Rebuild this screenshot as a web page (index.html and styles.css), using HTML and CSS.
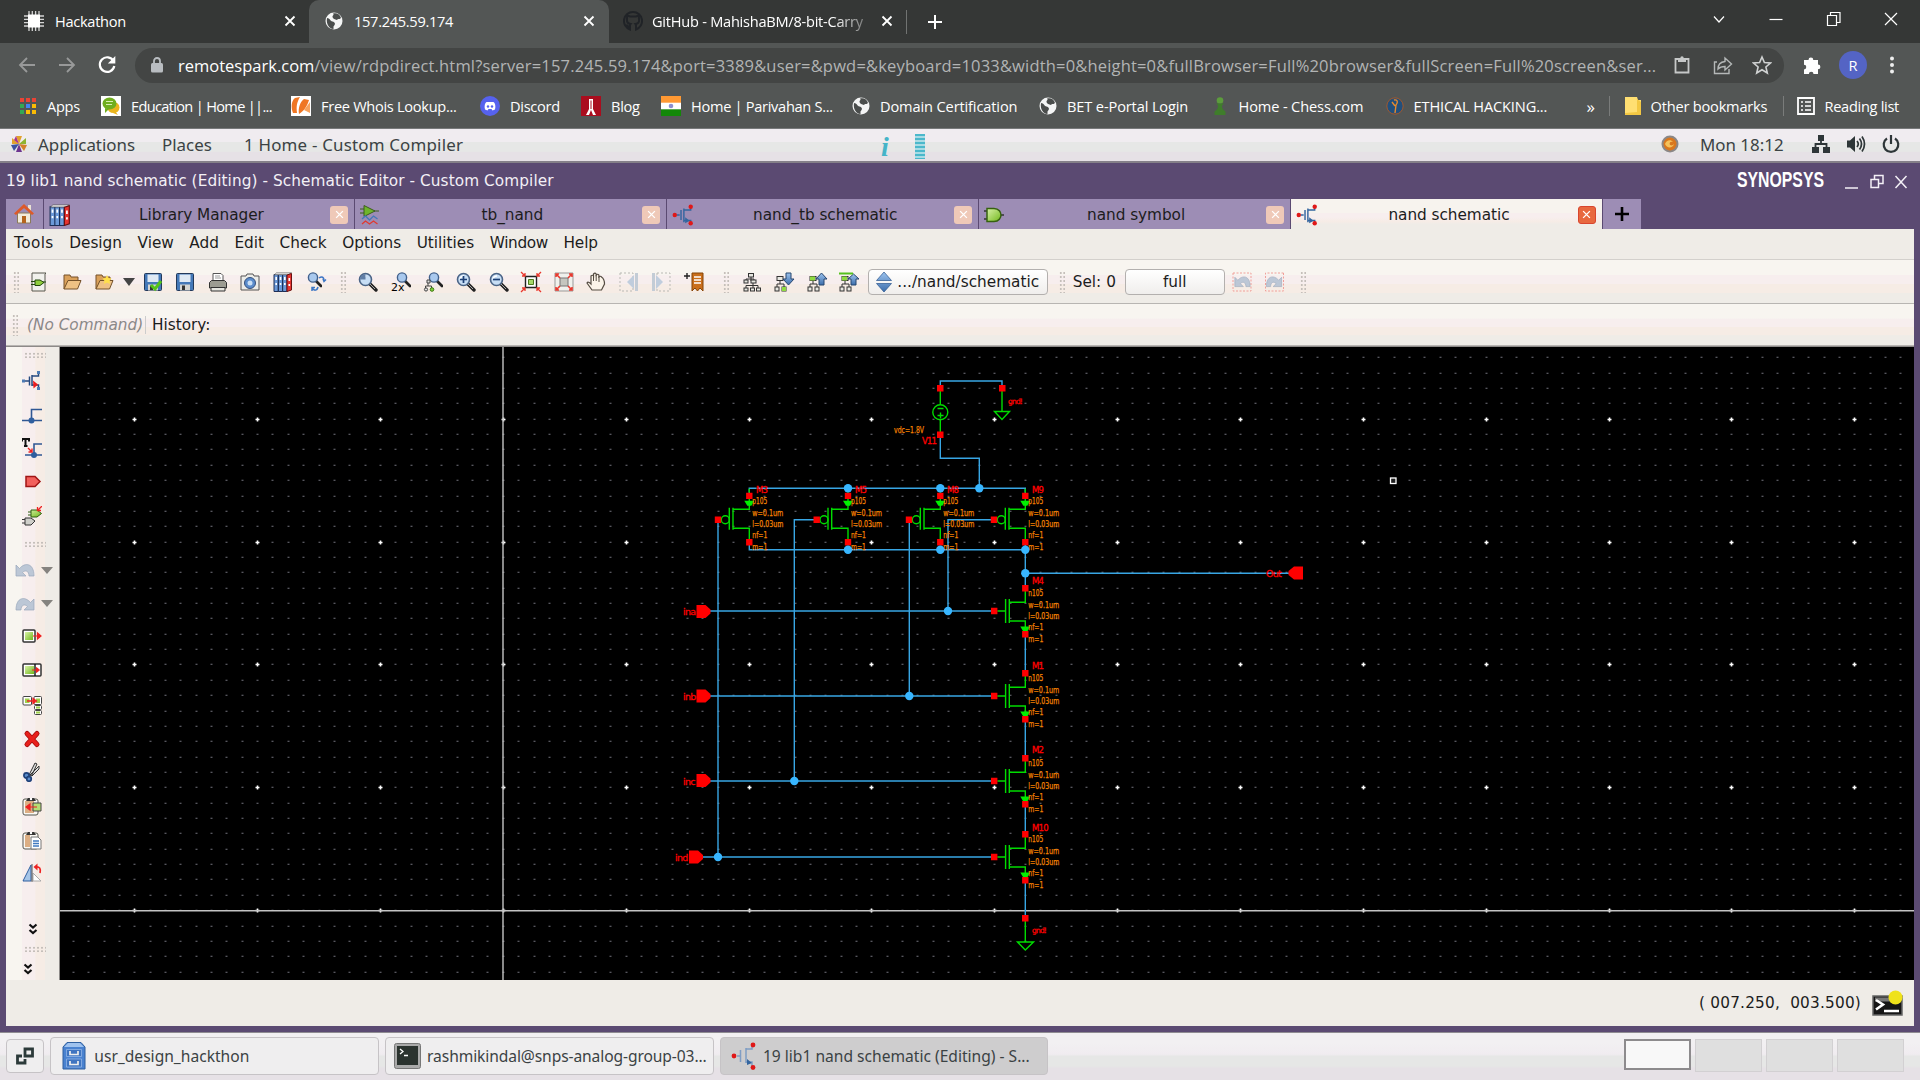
FILE: index.html
```
<!DOCTYPE html>
<html lang="en">
<head>
<meta charset="utf-8">
<title>157.245.59.174</title>
<link rel="stylesheet" href="styles.css">
</head>
<body>
<svg class="defs" aria-hidden="true">
  <linearGradient id="blueG" x1="0" y1="0" x2="0" y2="1"><stop offset="0" stop-color="#9cc3ee"/><stop offset="1" stop-color="#3c6dab"/></linearGradient>
  <linearGradient id="greenG" x1="0" y1="0" x2="1" y2="1"><stop offset="0" stop-color="#d9f2a8"/><stop offset="1" stop-color="#72b81c"/></linearGradient>
  <symbol id="globe" viewBox="0 0 18 18"><circle cx="9" cy="9" r="8.500" fill="#f4f5f5"/><path d="M2 6c3 0 3 3 5.500 3.500S11 12 8.500 14.500v2.500C4 16.500 1 12 2 6zM8 1.500c4-1 7 1 8 4.500-2 2-3 0-4 2-2-1-4-1-4.500-3 0-2 2-2 .5-3.500z" fill="#4a4d4c"/></symbol>
  <symbol id="x" viewBox="0 0 12 12"><path d="M1.500 1.500l9 9M10.500 1.500l-9 9" stroke="currentColor" stroke-width="1.800" fill="none"/></symbol>
  <symbol id="mag" viewBox="0 0 20 20"><path d="M11 11l7 7" stroke="#222" stroke-width="3.400" stroke-linecap="round"/><path d="M12 12l5 5" stroke="#aaa" stroke-width="1"/><circle cx="7.500" cy="7.500" r="6" fill="#c7def5" stroke="#4a6486" stroke-width="1.600"/><path d="M4 7a4 4 0 0 1 4-3" stroke="#fff" stroke-width="1.500" fill="none"/></symbol>
  <symbol id="smag" viewBox="0 0 20 20"><path d="M14 9l5 5" stroke="#222" stroke-width="2.800" stroke-linecap="round"/><circle cx="11" cy="5.500" r="4.600" fill="#a9c9ee" stroke="#41618c" stroke-width="1.400"/></symbol>
  <symbol id="folder" viewBox="0 0 20 20"><path d="M2 17V3h6l1 2h7v4" fill="#d9a05a" stroke="#74512a"/><path d="M2 17l4-8.500h13L15.500 17z" fill="#eec184" stroke="#74512a"/></symbol>
  <symbol id="disk" viewBox="0 0 20 20"><rect x="1.500" y="1.500" width="17" height="17" rx="1" fill="#4478b8" stroke="#23395a"/><rect x="4.500" y="2.500" width="11" height="7.500" fill="#dfe9f4"/><rect x="5" y="12.500" width="10" height="6" fill="#d5d5d2"/><rect x="7" y="13.500" width="3" height="4.500" fill="#333"/></symbol>
  <symbol id="books" viewBox="0 0 20 20"><path d="M1 2.500h4.300v17H1zM5.300 2.500h4.300v17H5.300zM9.600 2.500h4.300v17H9.600z" fill="#6b99d8" stroke="#1c2f57"/><path d="M3.500 .8h15l-3 1.900h-14z" fill="#eee" stroke="#555" stroke-width=".6"/><path d="M14 3l4.500-1.500V18L14 19.500z" fill="#e6332f" stroke="#691010"/><path d="M2.400 5h1.600v3H2.400zM6.700 5h1.600v3H6.700zM11 5h1.600v3H11zM2.400 11h1.600v2H2.400zM6.700 11h1.600v2H6.700zM11 11h1.600v2H11zM15.500 6h1.600v3h-1.600zM15.500 12h1.600v2h-1.600z" fill="#fff"/></symbol>
  <symbol id="fet" viewBox="0 0 20 20"><path d="M4 10h3M8.200 5.500v9M10.800 4v12.500M10.800 5.500H17V2M10.800 15H17v4" fill="none" stroke="#33659f" stroke-width="1.300"/><path d="M12 12l4 3.200-4 2.400z" fill="#33659f"/><circle cx="2.500" cy="10" r="2" fill="#e01818"/><circle cx="17" cy="2.500" r="2" fill="#e01818"/><circle cx="17" cy="17.500" r="2" fill="#e01818"/></symbol>
  <symbol id="inst" viewBox="0 0 20 20"><path d="M2 10h5M7.500 5.500v9M10 5h6.500V2M10 4v11M10 14h6.500v4" fill="none" stroke="#274a80" stroke-width="1.500"/><path d="M11 9.500l5 4-4.500 4z" fill="#ee1c1c"/><path d="M0 8.500h3v3H0zM15 0h3v3h-3zM15 16h3v3h-3z" fill="#4e7bb4"/></symbol>
  <symbol id="tree" viewBox="0 0 20 20"><path d="M9 5v4M4 16v-2.500h12V16M11 11v5M4 8V7h8v1" stroke="#333" fill="none"/><g fill="#e6e6e0" stroke="#333"><rect x="6.500" y="1.500" width="5" height="3.500"/><rect x="2" y="8" width="4" height="3"/><rect x="9" y="8" width="5" height="3"/><rect x="2" y="16" width="4" height="3"/><rect x="8.500" y="16" width="4" height="3"/><rect x="14.500" y="16" width="4" height="3"/></g></symbol>
  <symbol id="ltree" viewBox="0 0 20 20"><path d="M6 8v4M3 16v-4h7v4" stroke="#333" fill="none"/><g fill="#e8e8e2" stroke="#333"><rect x="3" y="4.500" width="6" height="4"/><rect x="1" y="15" width="4" height="4"/><rect x="8" y="15" width="4" height="4"/></g></symbol>
  <symbol id="undo" viewBox="0 0 20 20"><path d="M1 5v11h10l-3.500-3.500c3-3 6.500-1.500 6.500 3.500h5C19 3 10 2 4.500 8.500z" fill="#bcc7d6" stroke="#9aa8ba" stroke-width=".7"/></symbol>
  <symbol id="clip" viewBox="0 0 20 20"><rect x="1" y="3" width="15" height="16" rx="2" fill="#faf7f2" stroke="#55564e"/><path d="M3 5h5v12H3z" fill="#dcae83"/><path d="M4 5l2-3h6l2 3z" fill="#333"/><circle cx="9" cy="3" r="1.200" fill="#fff"/></symbol>
  <symbol id="dchev" viewBox="0 0 10 12"><path d="M1.500 1.500L5 4.500l3.500-3M1.500 7L5 10l3.500-3" fill="none" stroke="#111" stroke-width="2.200"/></symbol>
  <symbol id="plug" viewBox="0 0 20 20"><path d="M9 4h6l4.500 3.500L15 11H9zM6 6h3M6 9h3" fill="url(#greenG)" stroke="#2d5c10"/><path d="M3 12h6l4 3-4 4H3zM0 13.500h3M0 17h3" fill="#cfcfca" stroke="#333"/></symbol>
</svg>

<header class="browser">
  <div class="tabstrip">
    <div class="btab btab-first">
      <svg class="i20" viewBox="0 0 20 20"><path d="M5 0v20M8.300 0v20M11.600 0v20M15 0v20M0 5h20M0 8.300h20M0 11.600h20M0 15h20" stroke="#d5d5d5" stroke-width="1.300"/><rect x="4" y="3.500" width="12" height="13" fill="#fff"/></svg>
      <span class="btitle">Hackathon</span><svg class="bx"><use href="#x"/></svg>
    </div>
    <div class="btab btab-active">
      <svg class="i18"><use href="#globe"/></svg>
      <span class="btitle">157.245.59.174</span><svg class="bx"><use href="#x"/></svg>
    </div>
    <div class="btab btab-third">
      <svg class="i20" viewBox="0 0 20 20"><path d="M10 1a9 9 0 0 0-3 17.500v-3c-2 .5-3-.5-3.500-2M10 1a9 9 0 0 1 3 17.500V15c0-1 0-1.500-.5-2 3-.5 4-2 3.500-5 0-1 0-2-.5-3.500l-2.500 1H7l-2.500-1C4 6 4 7 4 8c-.5 3 .5 4.500 3.500 5-.5.500-.5 1-.5 2" fill="none" stroke="#202327" stroke-width="2"/></svg>
      <span class="btitle fade">GitHub - MahishaBM/8-bit-Carry</span><svg class="bx"><use href="#x"/></svg>
    </div>
    <span class="tabsep"></span>
    <svg class="newtab" viewBox="0 0 16 16"><path d="M8 1v14M1 8h14" stroke="#fff" stroke-width="2"/></svg>
    <div class="wctl">
      <svg viewBox="0 0 16 16"><path d="M3 5.500l5 5.500 5-5.500" class="l1"/></svg>
      <svg viewBox="0 0 16 16"><path d="M1.500 8.500h13" class="l1"/></svg>
      <svg viewBox="0 0 16 16"><path d="M1.500 4.500h9v10h-9zM4.500 4V1.500h9.500v10h-3" class="l1"/></svg>
      <svg viewBox="0 0 16 16"><path d="M2 2l12 12M14 2L2 14" class="l1"/></svg>
    </div>
  </div>
  <div class="navbar">
    <svg class="i20 dim" viewBox="0 0 20 20"><path d="M18 10H3M10 3l-7 7 7 7" class="l2"/></svg>
    <svg class="i20 dim" viewBox="0 0 20 20"><path d="M2 10h15M10 3l7 7-7 7" class="l2"/></svg>
    <svg class="i20" viewBox="0 0 20 20"><path d="M16.500 6A7.300 7.300 0 1 0 17.300 11" fill="none" stroke="#fff" stroke-width="2.200"/><path d="M18.300 1v7.500h-7.500z" fill="#fff"/></svg>
    <div class="omnibox">
      <svg class="lock" viewBox="0 0 12 16"><rect x="0" y="6" width="12" height="9.500" rx="1.500" fill="#b9bdc1"/><path d="M3 7V4a3 3 0 0 1 6 0v3" fill="none" stroke="#b9bdc1" stroke-width="1.800"/></svg>
      <span class="url"><b>remotespark.com</b>/view/rdpdirect.html?server=157.245.59.174&amp;port=3389&amp;user=&amp;pwd=&amp;keyboard=1033&amp;width=0&amp;height=0&amp;fullBrowser=Full%20browser&amp;fullScreen=Full%20screen&amp;ser...</span>
      <svg class="i18 o1" viewBox="0 0 18 18"><path d="M2.500 3h13v13.500h-13z" fill="none" stroke="#c6c8c8" stroke-width="1.800"/><path d="M5 2h8v4H5z" fill="#c6c8c8"/><circle cx="9" cy="2" r="1.700" fill="#c6c8c8"/></svg>
      <svg class="i20 o2" viewBox="0 0 20 20"><path d="M4 7H1.500v11.500H16V14" fill="none" stroke="#b5b8b8" stroke-width="1.400"/><path d="M5 14c0-5 3-7 7-7.500V3l6.500 6-6.500 6v-3.500c-3 0-5 .5-7 2.500z" fill="none" stroke="#b5b8b8" stroke-width="1.400"/></svg>
      <svg class="i20 o3" viewBox="0 0 20 20"><path d="M10 2l2.400 5.500 6 .5-4.500 4 1.400 6-5.300-3.200L4.700 18l1.400-6-4.500-4 6-.5z" fill="none" stroke="#d0d2d2" stroke-width="1.600"/></svg>
    </div>
    <svg class="i20 puzzle" viewBox="0 0 20 20"><path d="M2 5h4.500a2.400 2.400 0 1 1 4.800 0H16v4.500a2.400 2.400 0 1 1 0 4.800V19h-4.500a2.300 2.300 0 1 0-4.600 0H2v-4.600a2.300 2.300 0 1 0 0-4.600z" fill="#fff"/></svg>
    <span class="avatar">R</span>
    <svg class="dots" viewBox="0 0 6 18"><circle cx="3" cy="2.500" r="2" fill="#eee"/><circle cx="3" cy="9" r="2" fill="#eee"/><circle cx="3" cy="15.500" r="2" fill="#eee"/></svg>
  </div>
  <nav class="bookmarks">
    <a><svg class="i18" viewBox="0 0 18 18"><path d="M1 1h4v4H1zM7 1h4v4H7zM13 1h4v4h-4z" fill="#ea4335"/><path d="M1 7h4v4H1z" fill="#34a853"/><path d="M7 7h4v4H7z" fill="#4285f4"/><path d="M13 7h4v4h-4z" fill="#fbbc05"/><path d="M1 13h4v4H1z" fill="#34a853"/><path d="M7 13h4v4H7zM13 13h4v4h-4z" fill="#fbbc05"/></svg><span>Apps</span></a>
    <a><svg class="i20" viewBox="0 0 20 20"><path d="M0 0h20v20H0z" fill="#fff"/><ellipse cx="12.500" cy="11.500" rx="6" ry="5.500" fill="#e9b41c"/><path d="M14 15l3 4-5-2z" fill="#e9b41c"/><ellipse cx="8.500" cy="7.500" rx="7" ry="6" fill="#6fae1e"/><path d="M5 5.500h7M5 8.500h6" stroke="#d8efb0"/><path d="M4 12l0 5 4-4z" fill="#6fae1e"/></svg><span class="tight">Education | Home ||...</span></a>
    <a><svg class="i20" viewBox="0 0 20 20"><path d="M0 0h20v20H0z" fill="#fff"/><path d="M2 17C0 12 0 5 4 2l5-1c-3 5-4 9-3 16zM8 18c-1-6 1-12 5-15l5 1c-2 6-4 10-10 14z" fill="#ef7623"/><path d="M13 14l6-8v11z" fill="#f8a25c"/></svg><span>Free Whois Lookup...</span></a>
    <a><svg class="i20" viewBox="0 0 20 20"><circle cx="10" cy="10" r="10" fill="#5662ee"/><path d="M5 13.500C4 10 5 7 6.500 6h7C15 7 16 10 15 13.500l-2.500 1-1-1.500h-3l-1 1.500z" fill="#fff"/><circle cx="8" cy="10.500" r="1.200" fill="#5662ee"/><circle cx="12" cy="10.500" r="1.200" fill="#5662ee"/></svg><span>Discord</span></a>
    <a><svg class="i20" viewBox="0 0 20 20"><path d="M0 0h20v20H0z" fill="#aa0d1e"/><path d="M8 3h4v10l3 6h-3l-2-5-2 5H5l3-6z" fill="#fff"/><path d="M9.500 4.500h1V13h-1z" fill="#aa0d1e"/></svg><span>Blog</span></a>
    <a><svg class="i20" viewBox="0 0 20 20"><path d="M0 0h20v20H0z" fill="#fff"/><path d="M0 0h20v6.700H0z" fill="#ff9933"/><path d="M0 13.300h20V20H0z" fill="#138808"/><circle cx="10" cy="10" r="2.300" fill="#8d8fce"/></svg><span>Home | Parivahan S...</span></a>
    <a><svg class="i18"><use href="#globe"/></svg><span class="wide">Domain Certification</span></a>
    <a><svg class="i18"><use href="#globe"/></svg><span class="wide">BET e-Portal Login</span></a>
    <a><svg class="i18" viewBox="0 0 18 18"><circle cx="9" cy="3.500" r="3.300" fill="#5c9c3c"/><path d="M5 6.500h8l-2 2c0 3 1 4 3.500 6V18h-11v-3.500C6 12.500 7 11.500 7 8.500z" fill="#3f7d2b"/></svg><span class="wide">Home - Chess.com</span></a>
    <a><svg class="i18" viewBox="0 0 18 18"><circle cx="9" cy="9" r="8.200" fill="#224f7c" stroke="#a3592c"/><path d="M8 3c4-1 4 3 2 5L9 16M6 5l3 4" stroke="#e58a2e" fill="none" stroke-width="1.400"/></svg><span class="wide">ETHICAL HACKING...</span></a>
    <a class="more">»</a>
    <a class="ob"><svg class="fold" viewBox="0 0 16 18"><path d="M0 0h12l1 3h3v15H0z" fill="#ffdf72"/><path d="M12 15V2l4 3v13H0v-2z" fill="#f3c843"/></svg><span>Other bookmarks</span></a>
    <a class="rl"><svg class="i18" viewBox="0 0 18 18"><path d="M1 1h16v16H1z" fill="none" stroke="#fff" stroke-width="1.800"/><path d="M4 5h2M4 9h2M4 13h2M8 5h6M8 9h6M8 13h6" stroke="#fff" stroke-width="1.700"/></svg><span>Reading list</span></a>
  </nav>
</header>

<div class="gpanel">
  <svg class="i18" viewBox="0 0 18 18"><path d="M9 9L6 1h6zM9 9l-7-6v6z" fill="#e2a22c"/><path d="M9 9l7-6v6z" fill="#8fb32f"/><path d="M9 9l8 1-3 6z" fill="#d4812a"/><path d="M9 9l3 8H6z" fill="#6d3590"/><path d="M9 9l-5 7-3-6z" fill="#3d52a0"/><path d="M6 1L4 5l5 4z" fill="#a7358c"/></svg>
  <span class="g1">Applications</span><span class="g2">Places</span><span class="g3">1 Home - Custom Compiler</span>
  <span class="info">i</span><span class="bars"></span>
  <div class="gright">
    <svg class="i18" viewBox="0 0 18 18"><circle cx="9" cy="9" r="8.500" fill="#8b8787"/><circle cx="9" cy="9" r="6.500" fill="#d9771d"/><path d="M4 9c1-4 6-5 8-2-3-1-4 1-3 3 2 1 3 0 4-1-1 4-7 5-9 0z" fill="#f6c25b"/></svg>
    <span class="clock">Mon 18:12</span>
    <svg class="i20" viewBox="0 0 20 20"><path d="M7 1h6v6H7zM1 13h7v6H1zM12 13h7v6h-7z" fill="#2e3638"/><path d="M10 7v3M4.500 13v-3h11v3" fill="none" stroke="#2e3638" stroke-width="1.800"/></svg>
    <svg class="i20" viewBox="0 0 20 20"><path d="M1 6.500h3L9 2v16l-5-4.500H1z" fill="#2e3638"/><path d="M11 7q2.500 3 0 6M13.500 4.500q4 5.500 0 11M16 2.500q5 7.500 0 15" fill="none" stroke="#2e3638" stroke-width="1.700"/></svg>
    <svg class="i20" viewBox="0 0 20 20"><path d="M6 4.500a7.300 7.300 0 1 0 8 0M10 1v9" fill="none" stroke="#2e3638" stroke-width="2.200"/></svg>
  </div>
</div>

<main class="app">
  <div class="apptitle">
    <span class="at">19 lib1 nand schematic (Editing) - Schematic Editor - Custom Compiler</span>
    <svg class="logo" viewBox="0 0 88 26"><text x="0" y="20" textLength="87" lengthAdjust="spacingAndGlyphs">SYNOPSYS</text></svg>
    <svg class="actl" viewBox="0 0 64 16"><path d="M1 14h13M27 5.500h7.500v8H27zM30.500 5V1.500H39v8h-4M51.500 2l11 12M62.500 2l-11 12" fill="none" stroke="#f3f0f6" stroke-width="1.500"/></svg>
  </div>
  <div class="apptabs">
    <div class="home"><svg class="i20" viewBox="0 0 20 20"><path d="M3.500 9h13v10h-13z" fill="#f3ecda" stroke="#8b7b5a"/><path d="M8 12h4v7H8z" fill="#b5651d"/><path d="M14 1h3v6h-3z" fill="#e9e2d4"/><path d="M0 9.500L10 0l10 9.500-2 1.500-8-7-8 7z" fill="#dd5a2a"/></svg></div>
    <div class="at1"><svg class="i22"><use href="#books"/></svg><span>Library Manager</span><i class="cl"><svg><use href="#x"/></svg></i></div>
    <div class="at1"><svg class="i20" viewBox="0 0 20 20"><path d="M0 4h4M0 8h4M14 6h5M4 .5v11L15 6z" fill="#6fb52c" stroke="#3d5c1c"/><path d="M2 14l3.500-3 4 4 4-4 4 3" fill="none" stroke="#4478b8" stroke-width="1.300"/><path d="M2 19l3.500-3 4 3 4-3 4 3" fill="none" stroke="#e03a30" stroke-width="1.300"/></svg><span>tb_nand</span><i class="cl"><svg><use href="#x"/></svg></i></div>
    <div class="at1"><svg class="i22"><use href="#fet"/></svg><span>nand_tb schematic</span><i class="cl"><svg><use href="#x"/></svg></i></div>
    <div class="at1"><svg class="i20" viewBox="0 0 20 20"><path d="M0 6h4M0 14h4M15 10h5" stroke="#333" stroke-width="1.500"/><path d="M3 3.500h7c5 0 7 4 7 6.500s-2 6.500-7 6.500H3z" fill="url(#greenG)" stroke="#36610f" stroke-width="1.500"/></svg><span>nand symbol</span><i class="cl"><svg><use href="#x"/></svg></i></div>
    <div class="at1 on"><svg class="i22"><use href="#fet"/></svg><span>nand schematic</span><i class="cl"><svg><use href="#x"/></svg></i></div>
    <div class="plus"><svg viewBox="0 0 16 16"><path d="M8 1v14M1 8h14" stroke="#000" stroke-width="2.600"/></svg></div>
  </div>
  <div class="menu"><span>Tools</span><span>Design</span><span>View</span><span>Add</span><span>Edit</span><span>Check</span><span>Options</span><span>Utilities</span><span>Window</span><span>Help</span></div>
  <div class="tools band">
    <i class="grip"></i>
    <b><svg viewBox="0 0 20 20"><path d="M3 1h14l-1 1v17H3z" fill="#f1f1ec" stroke="#56564c"/><path d="M6 8h5l4 2.500-4 3H6zM2 9.500h4M2 12.500h4M14 10h3" fill="#8fce3d" stroke="#23470d"/></svg></b>
    <b><svg><use href="#folder"/></svg></b>
    <b><svg viewBox="0 0 20 20"><use href="#folder" width="20" height="20"/><path d="M13 3l1.500 3 3 .5-2 2.500.5 3-3-1.500-3 1.500.5-3-2-2.500 3-.5z" fill="#ffe04a"/></svg></b>
    <b class="car"><svg viewBox="0 0 12 8"><path d="M0 0h12L6 8z" fill="#444"/></svg></b>
    <b><svg viewBox="0 0 20 20"><use href="#disk" width="20" height="20"/><path d="M8 13l4 4 6-8" fill="none" stroke="#55c41a" stroke-width="3"/></svg></b>
    <b><svg><use href="#disk"/></svg></b>
    <b><svg viewBox="0 0 20 20"><path d="M5 10V1.500h8l2 2V10" fill="#fff" stroke="#555"/><path d="M1.500 10.500l2-2h13l2 2V16h-17z" fill="#9c9c92" stroke="#333"/><path d="M3 15.500h14V19H3z" fill="#e6e6e0" stroke="#333"/><path d="M7 4h5M7 6h6" stroke="#999"/></svg></b>
    <b><svg viewBox="0 0 20 20"><path d="M1 4h5l1-2h6l1 2h5v14H1z" fill="#ecece8" stroke="#555"/><circle cx="10" cy="11" r="5.500" fill="#5a8ccc" stroke="#35507c"/><circle cx="10" cy="11" r="2.500" fill="#c9dff5"/></svg></b>
    <b><svg><use href="#books"/></svg></b>
    <b><svg viewBox="0 0 20 20"><use href="#smag" x="-4" width="20" height="20"/><path d="M13 6c3-2 5-1 5 3M17 7l1 2.500 2-2M12 15c-1 4-4 4-6 1M6 19v-3.500h3" fill="none" stroke="#3b76c4" stroke-width="1.500"/></svg></b>
    <i class="grip mid"></i>
    <b><svg viewBox="0 0 20 20"><use href="#mag" width="20" height="20"/><path d="M7.500 7.500H2A5.500 5.500 0 0 1 7.500 2z" fill="#5f7ea6"/></svg></b>
    <b><svg viewBox="0 0 20 20"><use href="#smag" width="20" height="20"/><text x="0" y="19" class="two">2x</text></svg></b>
    <b><svg viewBox="0 0 20 20"><use href="#smag" width="20" height="20"/><path d="M5 10v4M2.500 16v-2h6v2" stroke="#444" fill="none"/><path d="M4 8h3v3H4z" fill="#ddd" stroke="#444"/><circle cx="3" cy="17.500" r="1.600" fill="#ddd" stroke="#444"/><circle cx="9" cy="17.500" r="1.800" fill="#7ed03a" stroke="#3c7a10"/></svg></b>
    <b><svg viewBox="0 0 20 20"><use href="#mag" width="20" height="20"/><path d="M4 7.500h7M7.500 4v7" stroke="#1c3f75" stroke-width="1.700"/></svg></b>
    <b><svg viewBox="0 0 20 20"><use href="#mag" width="20" height="20"/><path d="M4 7.500h7" stroke="#1c3f75" stroke-width="1.700"/></svg></b>
    <b><svg viewBox="0 0 20 20"><path d="M4.500 4.500h11v11h-11z" fill="#fff" stroke="#222" stroke-width="1.400"/><path d="M7.500 7.500h5v5h-5z" fill="#a5d86a" stroke="#4d7b1e"/><path d="M0 0l4 4M20 0l-4 4M0 20l4-4M20 20l-4-4M1 4h3V1M19 4h-3V1M1 16h3v3M19 16h-3v3" stroke="#e8382e" fill="none" stroke-width="1.300"/></svg></b>
    <b><svg viewBox="0 0 20 20"><path d="M1 1h18v18H1z" fill="#f0f0ec" stroke="#999"/><path d="M6 6h8v8H6z" fill="#c5c5be" stroke="#777"/><path d="M2 2l4 4M18 2l-4 4M2 18l4-4M18 18l-4-4M2 5V2h3M15 2h3v3M2 15v3h3M15 18h3v-3" stroke="#e8382e" fill="none" stroke-width="1.600"/></svg></b>
    <b><svg viewBox="0 0 20 20"><path d="M6 18l-5-7q1-2 4 1V4q1.500-1.500 2.500 0V2q1.500-1.800 2.700 0v1q1.500-1.500 2.700 0v2q1.700-1.500 2.600 0 3 2 3 7l-3 6z" fill="#fbf4e9" stroke="#544c42" stroke-width="1.200"/><path d="M7.500 4v5M10.200 3v6M13 4.500V10" stroke="#544c42"/></svg></b>
    <b><svg viewBox="0 0 20 20"><path d="M1 1h13v18H1z" fill="none" stroke="#b9b9b4" stroke-dasharray="2 2"/><path d="M15 3v14l-7-7z" fill="#c0cddd"/><path d="M16 1h3v18h-3z" fill="#c3ccd6"/></svg></b>
    <b><svg viewBox="0 0 20 20"><path d="M6 1h13v18H6z" fill="none" stroke="#b9b9b4" stroke-dasharray="2 2"/><path d="M5 3v14l7-7z" fill="#c0cddd"/><path d="M1 1h3v18H1z" fill="#c3ccd6"/></svg></b>
    <b><svg viewBox="0 0 20 20"><path d="M0 4h6M3 1v6" stroke="#222" stroke-width="1.400"/><path d="M8 1h11v18l-3-3-2.500 3-2.500-3-3 3z" fill="#c96f1c" stroke="#854507"/><path d="M10 5h7M10 8h7M10 11h7" stroke="#fff" stroke-width="1.400"/></svg></b>
    <i class="grip g3b"></i>
    <b><svg><use href="#tree"/></svg></b>
    <b><svg viewBox="0 0 20 20"><use href="#ltree" width="20" height="20"/><path d="M12 1h5v6h3l-5.500 6L9 7h3z" fill="url(#blueG)" stroke="#27466f"/><path d="M8 15h4v4H8z" fill="#8edb40"/></svg></b>
    <b><svg viewBox="0 0 20 20"><use href="#ltree" width="20" height="20"/><path d="M12 13V7H9l5.500-6L20 7h-3v6z" fill="url(#blueG)" stroke="#27466f"/><path d="M3 4.500h5v4H3z" fill="#8edb40"/></svg></b>
    <b><svg viewBox="0 0 20 20"><use href="#ltree" width="20" height="20"/><path d="M12 13V7H9l5.500-5L20 7h-3v6z" fill="url(#blueG)" stroke="#27466f"/><path d="M0 1.500h14" stroke="#55c01d" stroke-width="2"/><path d="M3 4.500h5v4H3z" fill="#8edb40"/></svg></b>
    <span class="btn path"><svg viewBox="0 0 16 20"><path d="M8 0l7.500 8.500H.5zM8 20l7.500-8.500H.5z" fill="url(#blueG)" stroke="#29548c" stroke-width=".7"/></svg>.../nand/schematic</span>
    <i class="grip g4"></i>
    <span class="sel">Sel: 0</span>
    <span class="btn full">full</span>
    <b class="ru"><svg viewBox="0 0 20 20"><path d="M1 1h18v18H1z" fill="none" stroke="#f0a09a" stroke-dasharray="2 1.500"/><use href="#undo" x="2" y="1" width="17" height="17"/></svg></b>
    <b class="ru flip"><svg viewBox="0 0 20 20"><path d="M1 1h18v18H1z" fill="none" stroke="#f0a09a" stroke-dasharray="2 1.500"/><use href="#undo" x="2" y="1" width="17" height="17"/></svg></b>
    <i class="grip g5"></i>
  </div>
  <div class="cmd band"><i class="grip"></i><em>(No Command)</em><span>History:</span></div>
  <div class="work">
    <aside class="side">
      <i class="hgrip"></i>
      <b><svg><use href="#inst"/></svg></b>
      <b><svg viewBox="0 0 20 20"><path d="M0 15.500h20M9.500 15V4.500H20" fill="none" stroke="#2f5793" stroke-width="1.600"/><circle cx="9.500" cy="15.500" r="3" fill="#2f5f9f"/></svg></b>
      <b><svg viewBox="0 0 20 20"><path d="M3 17h17M12 16V6h8" fill="none" stroke="#2f5793" stroke-width="1.600"/><circle cx="12" cy="17" r="3" fill="#2f5f9f"/><path d="M0 1h7v2.500M3.500 1v7M0 1v2.500M2 8h3.500" stroke="#111" stroke-width="2" fill="none"/><path d="M6 10l4 4M10 10.500V14H6.500" stroke="#e22" fill="none" stroke-width="1.400"/></svg></b>
      <b><svg viewBox="0 0 20 20"><path d="M4 4.500h9l5 5-5 5H4z" fill="#f2605c" stroke="#a01515" stroke-width="1.500"/></svg></b>
      <b><svg viewBox="0 0 20 20"><use href="#plug" width="20" height="20"/><path d="M20 0l-4 4M15.500 1v3.500H19" stroke="#e22" fill="none" stroke-width="1.300"/></svg></b>
      <i class="hgrip h2"></i>
      <b class="ud"><svg><use href="#undo"/></svg><svg class="cr" viewBox="0 0 12 7"><path d="M0 0h12L6 7z" fill="#85837f"/></svg></b>
      <b class="ud"><svg class="mir"><use href="#undo"/></svg><svg class="cr" viewBox="0 0 12 7"><path d="M0 0h12L6 7z" fill="#85837f"/></svg></b>
      <b class="up"><svg viewBox="0 0 20 20"><rect x="1" y="4" width="12" height="12" rx="1" fill="#fff" stroke="#333" stroke-width="1.500"/><path d="M3 6h8v8H3z" fill="url(#greenG)"/><path d="M11 10h6M15.500 7l3.500 3-3.500 3z" stroke="#e22" fill="#e22" stroke-width="1.200"/></svg></b>
      <b class="up"><svg viewBox="0 0 20 20"><rect x="1" y="4" width="18" height="12" rx="1" fill="#fff" stroke="#333" stroke-width="1.500"/><path d="M3 6h9v8H3z" fill="url(#greenG)"/><path d="M13 4v12" stroke="#111" stroke-width="1.400"/><path d="M10 10h5M14.500 7.500l3 2.500-3 2.500z" stroke="#e22" fill="#e22"/></svg></b>
      <b><svg viewBox="0 0 20 20"><g fill="#fff" stroke="#444"><rect x="1" y="1.500" width="8.500" height="8.500" rx="1"/><rect x="12" y="1.500" width="7.500" height="8" rx="1"/><rect x="12.500" y="10.500" width="7" height="4" rx="1"/><rect x="12.500" y="15.500" width="7" height="4" rx="1"/></g><path d="M3 3.500h4.500V8H3zM14 3.500h4V8h-4zM14 11.500h4v2h-4zM14 16.500h4v2h-4z" fill="#9fd04a"/><path d="M5 6h6M11 3.500L14.500 6 11 8.500z" stroke="#e22" fill="#e22" stroke-width="1.300"/></svg></b>
      <b><svg viewBox="0 0 20 20"><path d="M5 4.500l10 11M15 4.500l-10 11" stroke="#a50d0d" stroke-width="5" stroke-linecap="round"/><path d="M5 4.500l10 11M15 4.500l-10 11" stroke="#e8201c" stroke-width="3.400" stroke-linecap="round"/></svg></b>
      <b><svg viewBox="0 0 20 20"><path d="M7 13L13 1l2 1-5 11zM8 13l9-9v3l-7 7z" fill="#ddd" stroke="#333"/><circle cx="4.500" cy="13.500" r="2.600" fill="#5a8ccc" stroke="#1f427a" stroke-width="1.700"/><circle cx="7" cy="17" r="2.300" fill="#5a8ccc" stroke="#1f427a" stroke-width="1.700"/></svg></b>
      <b><svg viewBox="0 0 20 20"><use href="#clip" width="20" height="20"/><path d="M3 5h9v12H3z" fill="#dcae83"/><path d="M11 7h8v8h-8z" fill="#b5dd74" stroke="#444"/><path d="M15 11H7M8 8l-4 3 4 3z" fill="#e22" stroke="#e22" stroke-width="1.200"/></svg></b>
      <b><svg viewBox="0 0 20 20"><use href="#clip" width="20" height="20"/><path d="M9 7h7l3 3v9H9z" fill="#fff" stroke="#777"/><path d="M11 11h6M11 13.500h6M11 16h6" stroke="#3f78c0" stroke-width="1.400"/></svg></b>
      <b><svg viewBox="0 0 20 20"><path d="M9 2v16H1z" fill="#a6c5e8" stroke="#2f5f9f"/><path d="M11 10v8h8z" fill="#fff" stroke="#aaa"/><path d="M10 1v18" stroke="#555"/><path d="M13 4c5-1 6 2 5 6" fill="none" stroke="#e22" stroke-width="1.700"/><path d="M15.500.5v7L11.500 4z" fill="#e22"/></svg></b>
      <svg class="chev"><use href="#dchev"/></svg>
      <i class="hgrip h3"></i>
      <svg class="chev c2"><use href="#dchev"/></svg>
    </aside>
    <svg class="canvas" viewBox="60 347 1854 633">
      <symbol id="pmos" overflow="visible">
        <path class="g" d="M0-31V-27M0-24V-10.500H-16.300M-16.300-12V10M-20-12V10M-16.300 8.500H0V20"/>
        <circle class="g" cx="-24" cy="0" r="4"/><path class="gf" d="M-5-19H5L2-14H-2z"/>
        <path class="r" d="M-3.200-27h6.400v6.400h-6.400zM-3.200 19.400h6.400v6.400h-6.400zM-34.500-3.200h6.400v6.400h-6.400z"/>
        <g class="p"><text x="3" y="-15.500" textLength="15" lengthAdjust="spacingAndGlyphs">p105</text><text x="3" y="-4" textLength="31" lengthAdjust="spacingAndGlyphs">w=0.1um</text><text x="3" y="7" textLength="31" lengthAdjust="spacingAndGlyphs">l=0.03um</text><text x="3" y="18" textLength="15" lengthAdjust="spacingAndGlyphs">nf=1</text><text x="3" y="30" textLength="15" lengthAdjust="spacingAndGlyphs">m=1</text></g>
      </symbol>
      <symbol id="nmos" overflow="visible">
        <path class="g" d="M-28 0H-19.700M0-20V-8.700H-16M-16-12V12M-19.700-12V12M-16 10H0V22"/>
        <path class="gf" d="M-5 15.500H5L2 20.500H-2z"/>
        <path class="r" d="M-3.200-26h6.400v6.400h-6.400zM-3.200 20h6.400v6.400h-6.400zM-34.300-3.200h6.400v6.400h-6.400z"/>
        <g class="p"><text x="3" y="-15.500" textLength="15" lengthAdjust="spacingAndGlyphs">n105</text><text x="3" y="-3.300" textLength="31" lengthAdjust="spacingAndGlyphs">w=0.1um</text><text x="3" y="8" textLength="31" lengthAdjust="spacingAndGlyphs">l=0.03um</text><text x="3" y="19" textLength="15" lengthAdjust="spacingAndGlyphs">nf=1</text><text x="3" y="30.500" textLength="15" lengthAdjust="spacingAndGlyphs">m=1</text></g>
      </symbol>
      <symbol id="pin" overflow="visible"><path class="r" d="M0-6.500H9L14-2V2L9 6.500H0z"/></symbol>
      <path id="minor"/><path id="major"/>
      <path class="axis" d="M503 347V980M60 910.700H1914"/>
      <path class="w" d="M940.300 388V381H1002V388M940.300 437V458.300H979.300V488.300M749.300 495V488.300H1025.300V495M749.300 545V549.700H1025.300M1025.300 545V588M1025.300 573.300H1290M815 519.700H794.300V781M718 519.700V857M909.300 519.700V696M991 519.700H948V611M710 611H991M710 696H991M710 781H991M703 857H991M1025.300 637V670M1025.300 721V755M1025.300 806V831M1025.300 882V916"/>
      <use href="#pmos" x="749.300" y="519.700"/><use href="#pmos" x="848" y="519.700"/><use href="#pmos" x="940.300" y="519.700"/><use href="#pmos" x="1025.300" y="519.700"/>
      <use href="#nmos" x="1025.300" y="611"/><use href="#nmos" x="1025.300" y="696"/><use href="#nmos" x="1025.300" y="781"/><use href="#nmos" x="1025.300" y="857"/>
      <g class="g"><path d="M940.300 391V404.500M940.300 420V432M1002 391V411.500M994.500 411.500H1009.500L1002 419.500zM937.500 408.500H943.500M937.500 415.500H943.500M940.500 412.500V418.500M1025.300 921V942M1017.500 942H1033.500L1025.300 950z"/><circle cx="940.300" cy="412.300" r="7.500"/></g>
      <path class="r" d="M937 385h6.500v6.500h-6.500zM999 385h6.500v6.500h-6.500zM937 431.500h6.500v6.500h-6.500zM1022 915h6.500v6.500h-6.500z"/>
      <g class="d"><circle cx="848" cy="488.300" r="4.200"/><circle cx="940.300" cy="488.300" r="4.200"/><circle cx="979.300" cy="488.300" r="4.200"/><circle cx="848" cy="549.700" r="4.200"/><circle cx="940.300" cy="549.700" r="4.200"/><circle cx="1025.300" cy="549.700" r="4.200"/><circle cx="1025.300" cy="573.300" r="4.200"/><circle cx="948" cy="611" r="4.200"/><circle cx="909.300" cy="696" r="4.200"/><circle cx="794.300" cy="781" r="4.200"/><circle cx="718" cy="857" r="4.200"/></g>
      <use href="#pin" x="696.500" y="611.500"/><use href="#pin" x="696.500" y="696"/><use href="#pin" x="696.500" y="780.500"/><use href="#pin" x="689" y="857"/>
      <path class="r" d="M1303 566.500H1294L1288.500 571V575L1294 579.500H1303z"/>
      <g class="n">
        <text x="756" y="493">M3</text><text x="855" y="493">M5</text><text x="947" y="493">M8</text><text x="1032" y="493">M9</text>
        <text x="1032" y="584">M4</text><text x="1032" y="669">M1</text><text x="1032" y="753">M2</text><text x="1032" y="831">M10</text>
        <text x="1008" y="404" class="sm">gnd!</text><text x="1032" y="933" class="sm">gnd!</text><text x="922" y="443.500">V11</text>
        <text x="683" y="615" class="lg">ina</text><text x="683" y="700" class="lg">inb</text><text x="683" y="784.500" class="lg">inc</text><text x="675" y="860.500" class="lg">ind</text><text x="1266" y="576.500" class="lg">Out</text>
      </g>
      <text class="vdc" x="894" y="433" textLength="30" lengthAdjust="spacingAndGlyphs">vdc=1.8V</text>
      <rect x="1390.500" y="478" width="5.500" height="5.500" fill="#222" stroke="#fff" stroke-width="1.300"/>
    </svg>
  </div>
  <div class="status"><span>( 007.250,&nbsp; 003.500)</span><svg viewBox="0 0 31 26"><path d="M1 6h29v19H1z" fill="#161616" stroke="#666" stroke-width="1.500"/><path d="M3 7.500h20v4H3z" fill="#777"/><path d="M4 10l7 4.500-7 5M12 21h15" fill="none" stroke="#fff" stroke-width="2.600"/><circle cx="23.500" cy="7.500" r="7" fill="#efe21a"/></svg></div>
</main>

<footer class="taskbar">
  <div class="showdesk"><svg viewBox="0 0 18 18"><path d="M9 2h7.500v7H9zM6 9H1.500v7H9v-4" fill="none" stroke="#2c3a3a" stroke-width="2.800"/></svg></div>
  <div class="task t1"><svg viewBox="0 0 24 28"><path d="M1 5l4-4.500h14L23 5v22H1z" fill="#4a82d0" stroke="#2f5f9f"/><path d="M2 5l4-4h12l4 4z" fill="#9fc2ee"/><path d="M4.500 7.500h15v7h-15zM4.500 17h15v8h-15z" fill="#3f74c0" stroke="#a9c8f0" stroke-width=".6"/><path d="M8 9v3.500h8V9M8 19v3.500h8V19" fill="none" stroke="#eee" stroke-width="1.700"/></svg><span>usr_design_hackthon</span></div>
  <div class="task t2"><svg viewBox="0 0 27 26"><rect x=".5" y=".5" width="26" height="25" rx="2" fill="#aaa" stroke="#777"/><rect x="3" y="3" width="21" height="19" fill="#2b332f"/><path d="M6 6l3 2.500L6 11M10 12.500h4" stroke="#fff" fill="none" stroke-width="1.300"/></svg><span>rashmikindal@snps-analog-group-03...</span></div>
  <div class="task t3"><svg viewBox="0 0 26 28"><path d="M6 14h3M9.500 8v12M15 6v15M15 7h6V3M15 20h6v4" fill="none" stroke="#7f9dc4" stroke-width="1.500"/><path d="M16 17l5 4-5 2z" fill="#33659f"/><circle cx="3" cy="14" r="2.400" fill="#e01818"/><circle cx="22" cy="3" r="2.400" fill="#e01818"/><circle cx="22" cy="25.500" r="2.400" fill="#e01818"/></svg><span>19 lib1 nand schematic (Editing) - S...</span></div>
  <div class="pager"><i class="cur"></i><i></i><i></i><i></i></div>
</footer>
<script src="script.js"></script>
</body>
</html>
```
FILE: script.js
```
// Grid of the schematic canvas: minor dots, and a cross at every eighth one.
const step = 122.86 / 8, x0 = 502.8, y0 = 910.2;
let minor = '', major = '';
for (let i = -28; i <= 92; i++) {
  const x = Math.round(x0 + i * step);
  if (x < 64 || x > 1911) continue;
  for (let j = -36; j <= 4; j++) {
    const y = Math.round(y0 + j * step);
    if (y < 349 || y > 978) continue;
    if (i % 8 === 0 && j % 8 === 0) major += `M${x - 1.5} ${y + 0.5}h4M${x + 0.5} ${y - 1.5}v4`;
    else minor += `M${x - 0.5} ${y + 0.3}h2`;
  }
}
document.getElementById('minor').setAttribute('d', minor);
document.getElementById('major').setAttribute('d', major);
```
FILE: styles.css
```
* { box-sizing: border-box; }
body { margin: 0; width: 1920px; height: 1080px; overflow: hidden; display: flex; flex-direction: column; font-family: "DejaVu Sans", sans-serif; font-size: 15.3px; color: #1c1c1c; background: #e8e5e8; white-space: nowrap; }
svg { flex: none; display: block; }
.defs { position: absolute; width: 0; height: 0; }
.i18 { width: 18px; height: 18px; }
.i20 { width: 20px; height: 20px; }
.i22 { width: 22px; height: 22px; }

.browser { height: 129px; background: #535655; color: #fff; font-family: "Open Sans", "Noto Sans", sans-serif; font-size: 14.6px; border-bottom: 1px solid #77797a; }
.tabstrip { height: 43px; background: #353736; display: flex; align-items: center; }
.btab { height: 43px; display: flex; align-items: center; }
.btab-first { width: 309px; padding: 0 13px 2px 24px; }
.btab-active { width: 300px; padding: 0 14px 2px 16px; background: #535655; border-radius: 10px 10px 0 0; }
.btab-third { width: 290px; padding: 0 6px 2px 14px; }
.btitle { flex: 1; margin-left: 11px; letter-spacing: -0.3px; }
.fade { margin: 0 17px 0 9px; min-width: 0; overflow: hidden; letter-spacing: -0.25px; -webkit-mask-image: linear-gradient(90deg, #000 85%, rgba(0,0,0,.35) 100%); }
.bx { width: 12px; height: 12px; }
.tabsep { width: 1px; height: 24px; background: #717372; margin-left: 7px; }
.newtab { width: 16px; height: 16px; margin-left: 20px; }
.wctl { margin-left: auto; display: flex; gap: 41.500px; padding: 0 21px 6px 0; }
.wctl svg { width: 16px; height: 16px; }
.l1 { fill: none; stroke: #fff; stroke-width: 1.2; }
.l2 { fill: none; stroke: #fff; stroke-width: 1.8; }
.dim { opacity: .4; }
.navbar { height: 45px; display: flex; align-items: center; padding: 0 0 1px 17px; gap: 20px; }
.omnibox { margin-left: -2px; width: 1649px; height: 35px; border-radius: 18px; background: #434544; display: flex; align-items: center; padding-left: 16px; }
.lock { width: 12px; height: 16px; }
.url { width: 1482px; margin-left: 15px; font-size: 16.5px; letter-spacing: 0.177px; color: #b2b4b4; }
.url b { font-weight: 400; color: #fff; letter-spacing: 0; }
.o1 { margin-left: 13px; } .o2 { margin-left: 22px; } .o3 { margin-left: 19px; }
.puzzle { margin-left: -2px; }
.avatar { width: 28px; height: 28px; margin: 0 0 0 -3px; border-radius: 50%; background: #5464c4; display: grid; place-items: center; }
.dots { width: 6px; height: 18px; margin-left: 2px; }
.bookmarks { height: 36px; display: grid; padding-left: 19px; grid-template-columns: 82px 190px 189px 101px 80px 191px 187px 187px 175px 204px 20px 174px 137px; grid-template-columns: 82px 190px 189px 101px 80px 191px 187px 171.500px 175px 201px 22px 174px 137px; align-items: center; letter-spacing: -0.3px; }
.bookmarks a { display: flex; align-items: center; gap: 10px; }
.bookmarks .tight { letter-spacing: -0.68px; }
.bookmarks .wide { letter-spacing: -0.13px; }
.bookmarks span { margin-top: -1px; }
.more { font-size: 17px; }
.ob { border-left: 1px solid #7a7c7b; padding-left: 15px; height: 20px; letter-spacing: -0.2px; }
.rl { border-left: 1px solid #7a7c7b; padding-left: 13px; height: 20px; }
.fold { width: 16px; height: 18px; }

.gpanel { height: 34px; background: linear-gradient(#f0ecf0 40%, #e6e7e6 41% 70%, #e6e1e6 72%); border-bottom: 2px solid #858089; display: flex; align-items: center; padding: 0 0 2px 10px; color: #3b4244; font-family: "Noto Sans", sans-serif; font-size: 16.9px; }
.g1 { margin-left: 10px; width: 124px; } .g2 { width: 82px; } .g3 { width: 637px; letter-spacing: 0.2px; }
.info { font: italic bold 28px/28px "Liberation Serif", serif; color: #45b4c8; width: 34px; margin-top: 5px; }
.bars { width: 10px; height: 25px; margin-top: 5px; background: repeating-linear-gradient(#4bb8cb 0 2px, #a9dbe4 2px 4px); }
.gright { margin-left: auto; display: flex; align-items: center; padding-right: 19px; }
.clock { margin: 0 27px 0 21px; width: 84px; }
.gright .i20 + .i20 { margin-left: 15px; }

.app { height: 869px; background: #efece7; border: solid #5b4a72; border-width: 0 6px 6px; display: flex; flex-direction: column; }
.apptitle { height: 36px; background: #5b4a72; margin-right: -6px; display: flex; align-items: center; color: #f3f0f6; }
.at { flex: 1; letter-spacing: 0.08px; }
.logo { width: 88px; height: 26px; margin-right: 19px; margin-top: -2px; overflow: visible; }
.logo text { font: bold 22px "Liberation Sans", sans-serif; fill: #fff; }
.actl { width: 64px; height: 16px; margin-right: 12px; margin-top: 2px; }
.apptabs { height: 30px; background: #5b4a72; display: flex; gap: 1px; }
.apptabs > div { background: #9d8db5; display: flex; align-items: center; }
.home { width: 36.500px; justify-content: center; }
.at1 { width: 310.900px; padding: 1px 6px 0 5px; }
.at1 span { flex: 1; text-align: center; padding-left: 2px; letter-spacing: -0.05px; }
.apptabs .on { background: linear-gradient(#f7f3ee 45%, #f7eeee 46% 60%, #f6ece6 75%, #efece7 85%); }
.cl { width: 18px; height: 18px; border-radius: 3px; background: #efc9b8; color: #fff; display: grid; place-items: center; }
.cl svg { width: 9px; height: 9px; stroke-width: 3; }
.on .cl { background: #e8683f; border: 1px solid #d8452e; }
.apptabs .plus { width: 38px; justify-content: center; }
.plus svg { width: 16px; height: 16px; }
.menu { height: 31px; display: flex; align-items: center; padding: 0 0 2px 8px; gap: 15.500px; border-bottom: 1px solid #d3d0cc; }
.menu span:nth-child(1) { letter-spacing: .4px; }
.menu span:nth-child(9) { letter-spacing: -.35px; }
.menu span:nth-child(10) { letter-spacing: -.1px; }
.band { background: linear-gradient(#f8f5f0 35%, #f7eeee 36% 55%, #f6ece5 56% 76%, #efece7 77%); border-bottom: 1px solid #b8b5b2; display: flex; align-items: center; }
.tools { height: 44px; padding-left: 1px; }
.tools b, .side b { font-weight: 400; width: 32.6px; display: grid; place-items: center; flex: none; }
.tools b svg, .side b svg { width: 20px; height: 20px; }
.grip { flex: none; width: 6px; height: 22px; margin: 0 4px 0 6px; background: radial-gradient(circle, #c5bfba 1px, transparent 1.300px) 0 0 / 3.500px 4px; }
.tools .mid { margin: 0 6px 0 8px; width: 6px; }
.tools .g3b { margin: 0 6px 0 13px; }
.tools .car { width: 15.500px; } .tools .car svg { width: 12px; height: 8px; }
.two { font: 11px "DejaVu Sans", sans-serif; fill: #000; }
.tools svg { overflow: visible; }
.btn { border: 1.500px solid #b3b0ae; border-radius: 4px; background: linear-gradient(#fff, #f0eeec); height: 26px; display: flex; align-items: center; justify-content: center; flex: none; }
.path { width: 180px; margin-left: 2px; gap: 5px; }
.path svg { width: 16px; height: 20px; }
.tools .g4 { margin: 0 8px 0 11px; }
.sel { width: 52px; }
.full { width: 100px; }
.tools .ru { width: 32.500px; } .flip { transform: scaleX(-1); }
.tools .ru:not(.flip) { margin-left: 1px; }
.tools .g5 { margin: 0 0 0 9px; }
.cmd { height: 42px; }
.cmd em { margin-left: 5px; width: 119px; color: #8b8888; overflow: hidden; border-right: 1px solid #ccc; margin-right: 6px; }
.work { height: 634px; display: flex; border-top: 1px solid #8d8a88; }
.side { width: 54px; background: linear-gradient(90deg, #f8f5f0 30%, #f7eeee 31% 55%, #f6ece5 56% 73%, #efece7 74%); border-right: 1px solid #8d8a88; display: flex; flex-direction: column; align-items: flex-start; }
.side b { height: 33.700px; width: 52px; }
.hgrip { width: 22px; height: 6px; margin: 5px 0 6px 18px; background: radial-gradient(circle, #c5bfba 1px, transparent 1.300px) 0 0 / 4px 3.500px; flex: none; }
.h2 { margin: 9px 0 6px 18px; }
.side .ud { display: flex; padding-left: 9px; gap: 6px; }
.side .ud .cr { width: 12px; height: 7px; }
.side .up { padding-bottom: 3px; }
.mir { transform: scaleX(-1); }
.chev { width: 10px; height: 12px; margin: 33px 0 0 22px; }
.h3 { margin: 11px 0 11px 18px; }
.c2 { margin: 0 0 0 17px; }
.canvas { width: 1854px; height: 633px; background: #000; }
#minor { stroke: #74747e; stroke-width: 1.1; }
#major { stroke: #fff; stroke-width: 1.6; }
.axis { stroke: #c4c4c4; stroke-width: 1.4; fill: none; }
.w { stroke: #38a6e4; stroke-width: 1.4; fill: none; }
.d { fill: #38b6ff; }
.g { stroke: #00dc00; stroke-width: 1.4; fill: none; }
.gf { fill: #00f000; }
.r { fill: #f00; }
.p text, .vdc { fill: #f88400; stroke: #f88400; stroke-width: .25; font: 9px "DejaVu Sans", sans-serif; }
.n text { fill: #f00; stroke: #f00; stroke-width: .3; font: 8.500px "DejaVu Sans", sans-serif; letter-spacing: -0.8px; }
.n .sm { font-size: 7.500px; } .n .lg { font-size: 9.500px; letter-spacing: -0.7px; }
.status { flex: 1; display: flex; align-items: center; justify-content: flex-end; padding-right: 11px; gap: 11px; letter-spacing: 0.2px; }
.status svg { width: 31px; height: 26px; }

.taskbar { flex: 1; border-top: 1px solid #8f8c92; background: linear-gradient(#f2f0f2 20%, #f0ecf0 45%, #e6e7e6 50% 70%, #e6e1e6 75%); display: flex; align-items: center; padding: 0 16px 2px 6px; gap: 6.300px; color: #3b4244; font-family: "Noto Sans", sans-serif; font-size: 15.6px; }
.showdesk, .task { border: 1.500px solid #c6c3c6; border-radius: 4px; background: #efeeef; display: flex; align-items: center; }
.showdesk { width: 38px; height: 34px; justify-content: center; }
.showdesk svg { width: 18px; height: 18px; }
.task { width: 328.500px; height: 38px; padding-left: 11px; gap: 8px; }
.t2 { padding-left: 8px; gap: 6px; } .t1 svg { width: 24px; height: 28px; }
.t2 svg { width: 27px; height: 26px; } .t2 { letter-spacing: -0.1px; }
.t3 { background: #cecdce; gap: 6px; padding-left: 10px; } .t3 svg { width: 26px; height: 28px; }
.pager { margin-left: auto; display: flex; gap: 4px; }
.pager i { width: 67px; height: 33px; background: #dfdfdf; border: 1px solid #d2d0d2; }
.pager .cur { background: #f8f8f8; border: 2.500px solid #8d8b8d; height: 31px; }
```
